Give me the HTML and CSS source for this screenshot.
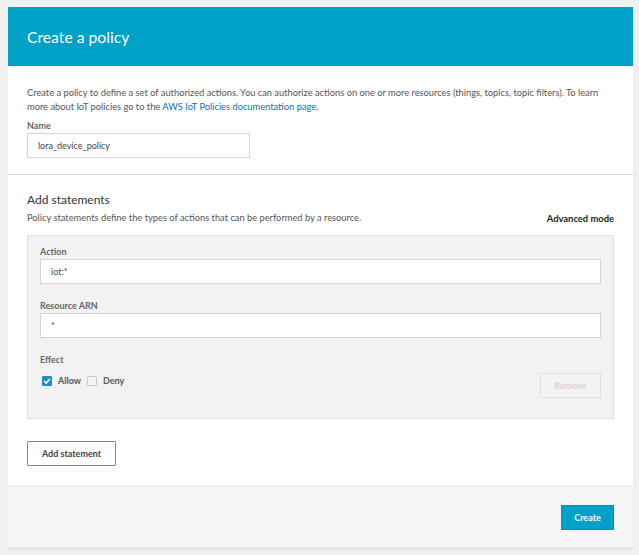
FILE: index.html
```html
<!DOCTYPE html>
<html>
<head>
<meta charset="utf-8">
<link rel="stylesheet" href="styles.css">
</head>
<body>
<div class="card">
  <div class="header"><h1>Create a policy</h1></div>
  <div class="section first">
    <p class="desc">Create a policy to define a set of authorized actions. You can authorize actions on one or more resources (things, topics, topic filters). To learn more about IoT policies go to the <a href="#">AWS IoT Policies documentation page</a>.</p>
    <div class="label">Name</div>
    <div class="input name">lora_device_policy</div>
  </div>
  <div class="section second">
    <h2>Add statements</h2>
    <div class="subrow">
      <span class="desc">Policy statements define the types of actions that can be performed by a resource.</span>
      <span class="adv">Advanced mode</span>
    </div>
    <div class="statement">
      <div class="label">Action</div>
      <div class="input wide">iot:*</div>
      <div class="label">Resource ARN</div>
      <div class="input wide">*</div>
      <div class="label effect">Effect</div>
      <div class="effect-row">
        <div class="checks">
          <span class="cb checked"><svg width="10" height="10" viewBox="0 0 10 10"><path d="M2.2 5.2 L4.2 7.1 L7.9 3" fill="none" stroke="#fff" stroke-width="1.6"/></svg></span>
          <span class="cbl">Allow</span>
          <span class="cb"></span>
          <span class="cbl">Deny</span>
        </div>
        <div class="btn remove">Remove</div>
      </div>
    </div>
    <div class="btn add">Add statement</div>
  </div>
  <div class="footer">
    <div class="btn create">Create</div>
  </div>
</div>
</body>
</html>
```
FILE: styles.css
```css
html, body { margin: 0; padding: 0; }
body {
  background: #f0f0f0;
  font-family: Lato, "Open Sans", sans-serif;
  color: #444;
  height: 555px;
  overflow: hidden;
}
.card {
  margin: 7px 0 0 8px;
  width: 625px;
  background: #fff;
  border-bottom: 3px solid #e6e6e6;
}
.header {
  background: #00a1c9;
  height: 59px;
  display: flex;
  align-items: center;
  padding-left: 19px;
}
.header h1 {
  margin: 0;
  color: #fff;
  font-weight: 400;
  font-size: 15.7px;
  font-family: Lato, "Open Sans", sans-serif;
}
.section { padding: 0 19px; }
.section.first {
  padding-top: 20px;
  padding-bottom: 16px;
  border-bottom: 1px solid #ddd;
}
.desc {
  margin: 0;
  font-size: 9.3px;
  line-height: 14px;
  color: #555;
}
.desc a { color: #0073bb; text-decoration: none; }
.label {
  font-size: 9px;
  font-weight: 700;
  color: #666;
  margin-top: 5px;
  line-height: 14px;
}
.input {
  box-sizing: border-box;
  height: 25px;
  border: 1px solid #d5d5d5;
  background: #fff;
  font-size: 9px;
  color: #444;
  padding: 0 10px;
  display: flex;
  align-items: center;
  margin-top: 0;
}
.input.name { width: 223px; }
.second { padding-top: 17px; padding-bottom: 20px; }
.second h2 {
  margin: 0;
  font-size: 12px;
  font-weight: 400;
  color: #333;
  font-family: Lato, "Open Sans", sans-serif;
  line-height: 16px;
}
.subrow {
  display: flex;
  justify-content: space-between;
  align-items: center;
  margin-top: 3px;
}
.adv { font-size: 9.4px; font-weight: 700; color: #222; }
.statement {
  margin-top: 10px;
  background: #f2f2f2;
  border: 1px solid #e0e0e0;
  padding: 9px 12px 20px 12px;
}
.statement .label:first-child { margin-top: 0; }
.statement .label { margin-top: 15px; }
.statement .label.effect { margin-top: 15px; }
.effect-row {
  display: flex;
  justify-content: space-between;
  align-items: flex-start;
  margin-top: 1px;
}
.checks { display: flex; align-items: center; padding-left: 2px; padding-top: 7px; }
.cb {
  box-sizing: border-box;
  width: 10px; height: 10px;
  border: 1px solid #ccc;
  background: #f4f4f4;
  border-radius: 1px;
  display: inline-flex;
}
.cb.checked { background: #1b8fc6; border-color: #1b8fc6; }
.cb svg { margin: -1px; }
.cbl { font-size: 9px; font-weight: 700; color: #555; margin: 0 6px 0 6px; }
.btn {
  box-sizing: border-box;
  display: inline-flex;
  align-items: center;
  justify-content: center;
  font-size: 9px;
  font-weight: 700;
  height: 25px;
}
.remove {
  width: 61px;
  border: 1px solid #e6dede;
  color: #e0cfcf;
  background: #f4f4f4;
  margin-top: 5px;
}
.add {
  margin-top: 22px;
  width: 89px;
  border: 1px solid #888;
  background: #fff;
  color: #444;
  border-radius: 1px;
}
.footer {
  background: #f5f5f5;
  border-top: 1px solid #e0e0e0;
  height: 60px;
  display: flex;
  justify-content: flex-end;
  align-items: center;
  padding-right: 19px;
}
.create {
  width: 53px;
  background: #00a1c9;
  color: #fff;
  border: 1px solid #0d8db0;
  margin-top: 0;
}
```
